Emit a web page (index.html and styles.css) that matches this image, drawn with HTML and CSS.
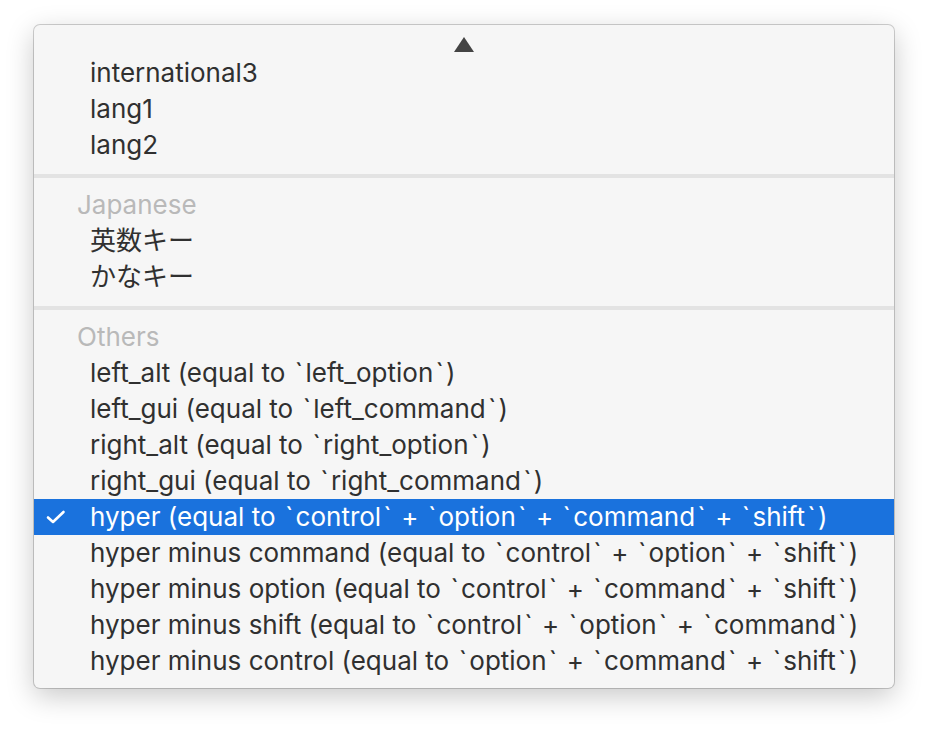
FILE: index.html
```html
<!DOCTYPE html>
<html>
<head>
<meta charset="utf-8">
<link rel="stylesheet" href="styles.css">
</head>
<body>
<div class="menu">
  <div class="scroll-up"><span class="tri"></span></div>
  <div class="item">international3</div>
  <div class="item">lang1</div>
  <div class="item">lang2</div>
  <div class="sep"></div>
  <div class="header">Japanese</div>
  <div class="item">英数キー</div>
  <div class="item">かなキー</div>
  <div class="sep"></div>
  <div class="header">Others</div>
  <div class="item">left_alt (equal to <span class="bt">`</span>left_option<span class="bt">`</span>)</div>
  <div class="item">left_gui (equal to <span class="bt">`</span>left_command<span class="bt">`</span>)</div>
  <div class="item">right_alt (equal to <span class="bt">`</span>right_option<span class="bt">`</span>)</div>
  <div class="item">right_gui (equal to <span class="bt">`</span>right_command<span class="bt">`</span>)</div>
  <div class="item selected"><svg class="check" width="20" height="14" viewBox="0 0 20 14"><path d="M2 7.5 L7 12 L17.5 2" fill="none" stroke="#fff" stroke-width="2.6" stroke-linecap="round" stroke-linejoin="round"/></svg>hyper (equal to <span class="bt">`</span>control<span class="bt">`</span> + <span class="bt">`</span>option<span class="bt">`</span> + <span class="bt">`</span>command<span class="bt">`</span> + <span class="bt">`</span>shift<span class="bt">`</span>)</div>
  <div class="item">hyper minus command (equal to <span class="bt">`</span>control<span class="bt">`</span> + <span class="bt">`</span>option<span class="bt">`</span> + <span class="bt">`</span>shift<span class="bt">`</span>)</div>
  <div class="item">hyper minus option (equal to <span class="bt">`</span>control<span class="bt">`</span> + <span class="bt">`</span>command<span class="bt">`</span> + <span class="bt">`</span>shift<span class="bt">`</span>)</div>
  <div class="item">hyper minus shift (equal to <span class="bt">`</span>control<span class="bt">`</span> + <span class="bt">`</span>option<span class="bt">`</span> + <span class="bt">`</span>command<span class="bt">`</span>)</div>
  <div class="item">hyper minus control (equal to <span class="bt">`</span>option<span class="bt">`</span> + <span class="bt">`</span>command<span class="bt">`</span> + <span class="bt">`</span>shift<span class="bt">`</span>)</div>
</div>
</body>
</html>
```
FILE: styles.css
```css
html, body {
  margin: 0;
  padding: 0;
  background: #ffffff;
}
body {
  width: 928px;
  height: 730px;
  overflow: hidden;
}
.menu {
  margin: 25px 0 0 34px;
  width: 860px;
  height: 663px;
  box-sizing: border-box;
  background: #f6f6f6;
  border-radius: 6px;
  box-shadow: 0 0 0 1px rgba(0,0,0,0.18), 0 8px 28px rgba(0,0,0,0.22);
  font-family: "Inter", "Noto Sans CJK JP", sans-serif;
  font-size: 26px;
  color: #303030;
  overflow: hidden;
}
.scroll-up {
  height: 30px;
  display: flex;
  justify-content: center;
  padding-top: 12px;
  box-sizing: border-box;
}
.tri {
  width: 0;
  height: 0;
  border-left: 10px solid transparent;
  border-right: 10px solid transparent;
  border-bottom: 15px solid #444;
}
.item {
  position: relative;
  height: 36px;
  line-height: 36px;
  padding-left: 56px;
  white-space: nowrap;
}
.bt {
  margin: 0 2.2px;
}
.header {
  height: 36px;
  line-height: 36px;
  padding-left: 43px;
  color: #b9b9b9;
}
.sep {
  height: 4px;
  margin: 11px 0 9px;
  background: #e3e3e3;
}
.selected {
  background: #1a72dd;
  color: #ffffff;
}
.check {
  position: absolute;
  left: 12px;
  top: 11px;
}
```
